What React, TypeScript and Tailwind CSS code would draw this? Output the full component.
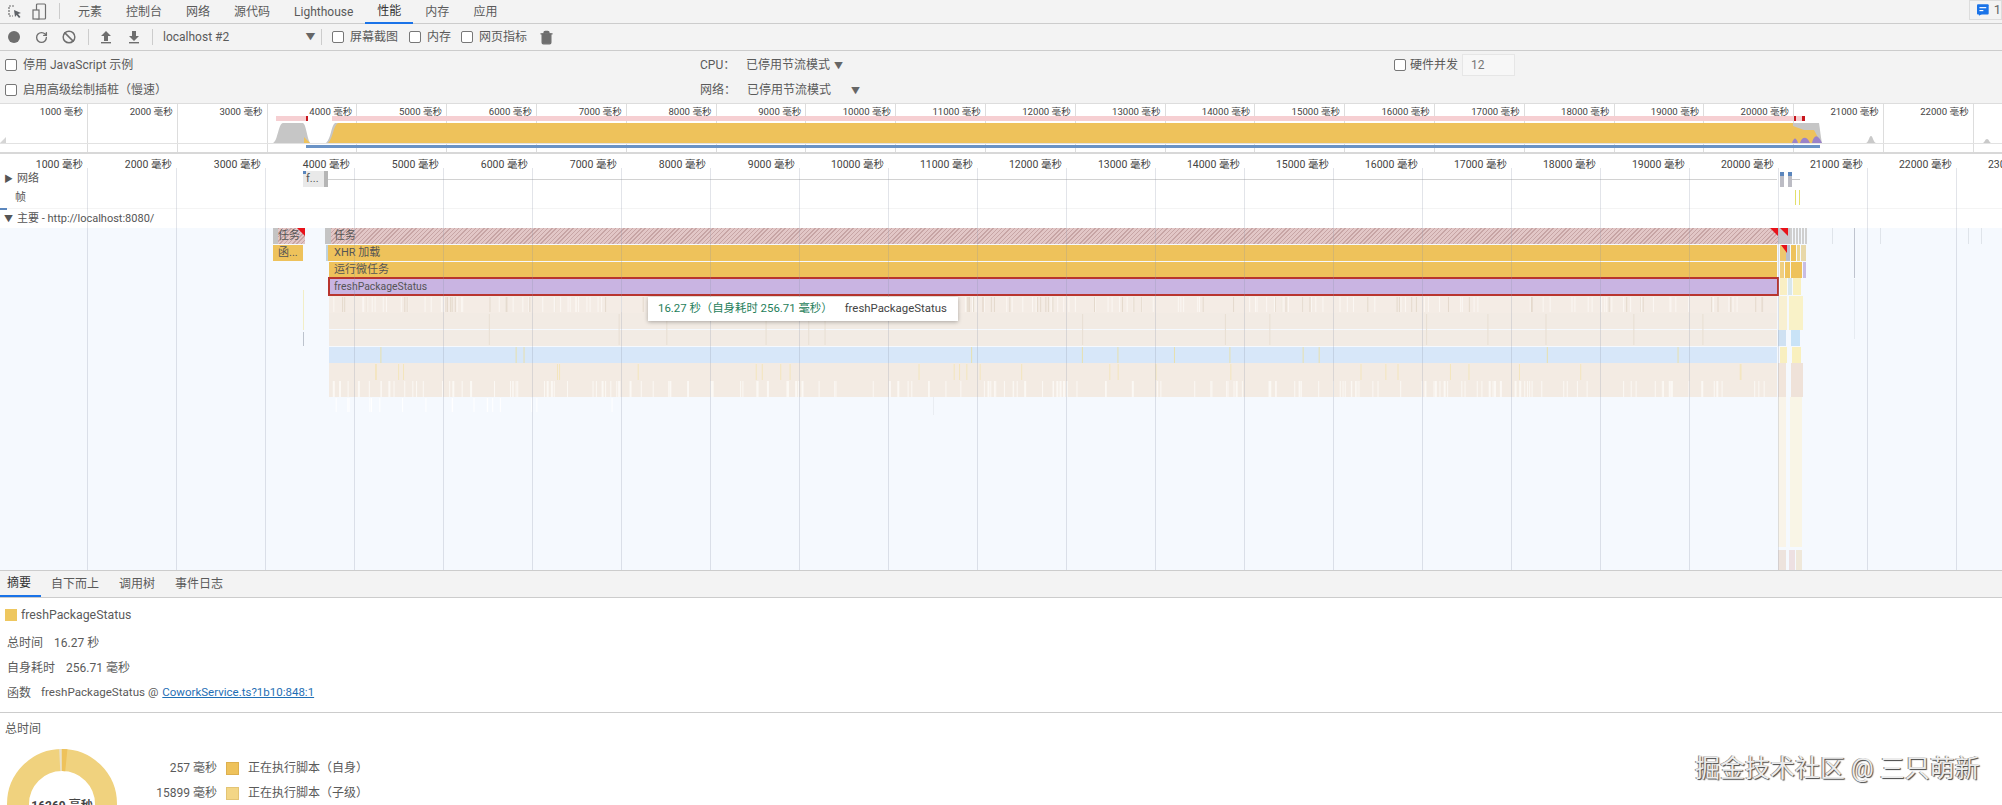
import React from 'react';
import { RotateCw, Ban, Trash2 } from 'lucide-react';

const overviewTicks = Array.from({ length: 23 }, (_, i) => (i + 1) * 1000);
const rulerTicks = Array.from({ length: 23 }, (_, i) => (i + 1) * 1000);
const panelTabs = ['元素', '控制台', '网络', '源代码', 'Lighthouse', '性能', '内存', '应用'];

// little repeatable generator so the flame texture looks the same on every run
function ticks(seed: number, from: number, to: number, count: number) {
  const out: number[] = [];
  let s = seed;
  for (let i = 0; i < count; i++) {
    s = (s * 9301 + 49297) % 233280;
    out.push(from + (s / 233280) * (to - from));
  }
  return out;
}

function Check() {
  return <input type="checkbox" className="appearance-none w-3 h-3 shrink-0 border border-[#777] rounded-[2px] bg-white" />;
}

function Sep() {
  return <div className="w-px h-4 bg-[#ccc] shrink-0" />;
}

function Tri() {
  return <span className="text-[9px] leading-none text-[#666] scale-x-110">▼</span>;
}

function InspectIcon() {
  return (
    <svg width="16" height="16" viewBox="0 0 16 16" fill="none">
      <path d="M7 2H2v10h4" stroke="#6e6e6e" strokeWidth="1.2" strokeDasharray="2 1" />
      <path d="M7 6l7 3-3 1 2.5 3-1.5 1-2.4-3L8 13z" fill="#5f6368" />
    </svg>
  );
}

function DeviceIcon() {
  return (
    <svg width="16" height="17" viewBox="0 0 16 17" fill="none">
      <rect x="4.5" y="1" width="9" height="15" rx="1" stroke="#6e6e6e" strokeWidth="1.2" />
      <rect x="1" y="7" width="6" height="9" fill="#f3f3f3" stroke="#6e6e6e" strokeWidth="1.2" />
    </svg>
  );
}

function ArrowIcon({ down }: { down?: boolean }) {
  return (
    <svg width="12" height="14" viewBox="0 0 12 14">
      <path d={down ? 'M4 1h4v5h3l-5 5-5-5h3z' : 'M6 1l5 5H8v5H4V6H1z'} fill="#6e6e6e" />
      <rect x="1" y="12" width="10" height="1.4" fill="#6e6e6e" />
    </svg>
  );
}

function OverviewChart() {
  return (
    <svg className="absolute inset-0" width="2002" height="49" viewBox="0 0 2002 49">
      <rect x="0" y="39" width="2002" height="1" fill="#e2e2e2" />
      <path d="M0 39l6-6v6zM3 39l3-3" fill="#d5d5d5" />
      <rect x="276" y="12" width="30" height="5" fill="#f6cfd2" />
      <rect x="306" y="12" width="2" height="5" fill="#c8161d" />
      <rect x="332" y="12" width="1461" height="5" fill="#f6cfd2" />
      <rect x="1794" y="12" width="2" height="5" fill="#c8161d" />
      <rect x="1796" y="12" width="6" height="5" fill="#f6cfd2" />
      <rect x="1802" y="12" width="3" height="5" fill="#c8161d" />
      <path d="M273 39C278 37 278 20 283 19L303 19C306 20 307 34 310 39Z" fill="#c6c6c6" />
      <path d="M304 33L310 39H304Z" fill="#eec25b" />
      <path d="M326 39C331 35 331 22 335 19H340V39Z" fill="#c6c6c6" />
      <path d="M328 39C333 35 333 22 338 19L1793 19L1793 39Z" fill="#eec25b" />
      <path d="M1793 19L1819 19C1820 25 1821 35 1822 39H1793Z" fill="#c6c6c6" />
      <path d="M1793 22L1804 26L1814 26L1821 39H1793Z" fill="#eec25b" />
      <path d="M1792 39C1794 33 1796 33 1798 39ZM1800 39C1802 32 1807 32 1810 39ZM1812 39C1814 30 1818 30 1822 39Z" fill="#9a83c9" />
      <path d="M1866 39C1869 38 1869 32 1871 32C1873 32 1873 38 1876 39Z" fill="#c9c9c9" />
      <path d="M1983 39C1985 38 1985 35 1987 35C1989 35 1989 38 1991 39Z" fill="#c9c9c9" />
      <rect x="306" y="41" width="1514" height="3" fill="#6a93c6" />
    </svg>
  );
}

function FlameTexture() {
  return (
    <svg className="absolute inset-0" width="2002" height="395" viewBox="0 0 2002 395">
      {/* rows below the selected call */}
      <rect x="329" y="121" width="1448" height="17" fill="#f4ece5" />
      <rect x="329" y="138" width="1448" height="16" fill="#f2ebe4" />
      <rect x="329" y="155" width="1448" height="16" fill="#f2ebe4" />
      <rect x="329" y="172" width="1448" height="16" fill="#d7e7f9" />
      <rect x="329" y="188" width="1448" height="17" fill="#f3ebe3" />
      <rect x="329" y="205" width="1448" height="17" fill="#f3ebe3" />
      {ticks(7, 332, 1776, 230).map((x, i) => (
        <rect key={i} x={x} y="122" width="1" height="15" fill={i % 3 === 0 ? '#e4d9cc' : '#fbf7f3'} />
      ))}
      {ticks(11, 340, 1770, 14).map((x, i) => (
        <rect key={i} x={x} y="139" width="1" height="31" fill="#e8dfd3" />
      ))}
      {ticks(23, 340, 1770, 12).map((x, i) => (
        <rect key={i} x={x} y="172" width="1" height="16" fill="#e7e0ae" />
      ))}
      {ticks(31, 340, 1770, 30).map((x, i) => (
        <rect key={i} x={x} y="189" width="1" height="16" fill="#f3e5bd" />
      ))}
      {ticks(43, 332, 1776, 170).map((x, i) => (
        <rect key={i} x={x} y="206" width={i % 4 === 0 ? 2 : 1} height="16" fill="#fbf8f4" />
      ))}
      {ticks(53, 332, 620, 18).map((x, i) => (
        <rect key={i} x={x} y="223" width="1" height="14" fill="#fff" />
      ))}
      <rect x="933" y="222" width="1" height="18" fill="#e9edf2" />

      {/* left call remnants */}
      <rect x="303" y="115" width="1" height="40" fill="#f2eec6" />
      <rect x="303" y="157" width="1" height="14" fill="#bcc3cd" />

      {/* end of the long task */}
      <rect x="1778" y="53" width="12" height="16" fill="#c9c6cb" />
      {[1790, 1793, 1796, 1799, 1802, 1805].map((x) => (
        <rect key={x} x={x} y="53" width="2" height="16" fill="#cfcfcf" />
      ))}
      <rect x="1780" y="70" width="6" height="16" fill="#eec76f" />
      <rect x="1786" y="70" width="4" height="16" fill="#b9bfcf" />
      <rect x="1791" y="70" width="5" height="16" fill="#eec25b" />
      <rect x="1797" y="70" width="3" height="16" fill="#ecd68f" />
      <rect x="1801" y="70" width="5" height="16" fill="#e8d8a8" />
      <rect x="1780" y="87" width="4" height="16" fill="#f0ce7e" />
      <rect x="1785" y="87" width="5" height="16" fill="#eec25b" />
      <rect x="1791" y="87" width="11" height="16" fill="#eec25b" />
      <rect x="1803" y="87" width="3" height="16" fill="#c8bde3" />
      <rect x="1780" y="103" width="7" height="17" fill="#f9efc4" />
      <rect x="1788" y="103" width="4" height="17" fill="#d8e7ec" />
      <rect x="1793" y="103" width="8" height="17" fill="#f9f0bd" />
      <rect x="1779" y="121" width="8" height="34" fill="#f8f0d2" />
      <rect x="1789" y="121" width="14" height="34" fill="#f9f2c8" />
      <rect x="1778" y="155" width="8" height="16" fill="#cfe1f2" />
      <rect x="1791" y="155" width="9" height="16" fill="#c9e3f7" />
      <rect x="1780" y="172" width="7" height="16" fill="#f8efc0" />
      <rect x="1792" y="172" width="9" height="16" fill="#f9f0be" />
      <rect x="1778" y="188" width="8" height="34" fill="#f1e5db" />
      <rect x="1791" y="188" width="12" height="34" fill="#efe2d9" />
      <rect x="1778" y="222" width="8" height="150" fill="#f9f4e9" />
      <rect x="1790" y="222" width="12" height="150" fill="#f9f5e6" />
      <rect x="1778" y="375" width="8" height="20" fill="#ede3dd" />
      <rect x="1789" y="375" width="6" height="20" fill="#ede0e2" />
      <rect x="1796" y="375" width="6" height="20" fill="#efe8da" />

      {/* short tasks after the recording */}
      {[1832, 1880, 1968, 1981].map((x) => (
        <rect key={x} x={x} y="53" width="1" height="16" fill="#dfe4ea" />
      ))}
      <rect x="1854" y="53" width="1" height="50" fill="#bfc4cf" />
      <rect x="1854" y="104" width="1" height="60" fill="#e6ebf1" />
    </svg>
  );
}

function FlameChart() {
  return (
    <div className="relative h-[395px]">
      <div className="absolute left-0 right-0 top-[53px] bottom-0 bg-[#f5f9fe]" />
      <div className="absolute left-0 top-[33px] w-[7px] h-[2px] bg-[#5b86bd]" />
      <div className="absolute left-[7px] right-0 top-[33px] h-px bg-[#f4f4f4]" />
      <FlameTexture />

      {/* track headers */}
      <div className="absolute left-[4px] top-[-4px] flex items-center gap-[4px] text-[11px] text-[#555]"><span className="text-[9px]">▶</span>网络</div>
      <div className="absolute left-[15px] top-[15px] text-[11px] text-[#555]">帧</div>
      <div className="absolute left-[4px] top-[36px] flex items-center gap-[4px] text-[11px] text-[#555]"><span className="text-[9px]">▼</span>主要 - http://localhost:8080/</div>

      {/* network requests */}
      <div className="absolute left-[303px] top-[-4px] w-[25px] h-[16px] bg-[#e9e9e9] border-r-4 border-[#b5b5b5] text-[11px] leading-[16px] text-[#555] pl-[3px]">f...</div>
      <div className="absolute left-[303px] top-[-4px] w-[3px] h-[3px] bg-[#5b86bd]" />
      <div className="absolute left-[328px] top-[4px] w-[1449px] h-px bg-[#d2d2d2]" />
      <div className="absolute left-[1780px] top-[-3px] w-[4px] h-[15px] bg-[#bcbcc4] border-t-[4px] border-[#5b86bd]" />
      <div className="absolute left-[1788px] top-[-3px] w-[4px] h-[15px] bg-[#bcbcc4] border-t-[4px] border-[#5b86bd]" />
      <div className="absolute left-[1792px] top-[4px] w-[8px] h-px bg-[#c8c8c8]" />
      <div className="absolute left-[1795px] top-[15px] w-px h-[15px] bg-[#e3e06a]" />
      <div className="absolute left-[1799px] top-[15px] w-px h-[15px] bg-[#e3e06a]" />

      {/* first small task */}
      <div className="absolute left-[273px] top-[53px] w-[32px] h-[16px] bg-[repeating-linear-gradient(135deg,#c7a5a5_0_1px,#e2c7c7_1px_3px)] border-l-[5px] border-[#c4c4c4] text-[11px] leading-[16px] text-[#555]">任务</div>
      <div className="absolute left-[295px] top-[53px] w-0 h-0 border-t-[8px] border-l-[8px] border-t-[#e8121a] border-l-transparent ml-[2px]" />
      <div className="absolute left-[273px] top-[70px] w-[30px] h-[16px] bg-[#eec25b] text-[11px] leading-[16px] text-[#555] pl-[5px]">函...</div>

      {/* long task stack */}
      <div className="absolute left-[325px] top-[53px] w-[1453px] h-[16px] bg-[repeating-linear-gradient(135deg,#c7a5a5_0_1px,#e2c7c7_1px_3px)] border-l-[6px] border-[#c4c4c4] text-[11px] leading-[16px] text-[#555] pl-[3px]">任务</div>
      <div className="absolute left-[1770px] top-[53px] w-0 h-0 border-t-[8px] border-l-[8px] border-t-[#e8121a] border-l-transparent" />
      <div className="absolute left-[1780px] top-[53px] w-0 h-0 border-t-[8px] border-l-[8px] border-t-[#e8121a] border-l-transparent" />
      <div className="absolute left-[1781px] top-[70px] w-0 h-0 border-t-[8px] border-l-[6px] border-t-[#e8121a] border-r-0 border-l-transparent" />
      <div className="absolute left-[326px] top-[70px] w-[1451px] h-[16px] bg-[#eec25b] border-l-2 border-[#bfd3df] text-[11px] leading-[16px] text-[#555] pl-[6px]">XHR 加载</div>
      <div className="absolute left-[329px] top-[87px] w-[1448px] h-[16px] bg-[#eec25b] text-[11px] leading-[16px] text-[#555] pl-[5px]">运行微任务</div>
      <div className="absolute left-[328px] top-[102px] w-[1451px] h-[19px] bg-[#c9b4e2] border-2 border-[#b8352f] text-[10.4px] leading-[15px] text-[#555] pl-[4px]">freshPackageStatus</div>

      {/* grid lines */}
      <div className="absolute left-0 right-0 top-[-7px] bottom-0 flex overflow-hidden pointer-events-none">
        <div className="w-[88px] shrink-0 border-r border-[#8a95a8]/25" />
        {rulerTicks.slice(1).map((t) => (
          <div key={t} className="w-[89px] shrink-0 border-r border-[#8a95a8]/25" />
        ))}
      </div>

      {/* hover tooltip */}
      <div className="absolute left-[648px] top-[122px] h-[24px] w-[310px] bg-white shadow-[0_1px_4px_rgba(0,0,0,0.3)] flex items-center pl-[10px] text-[11.4px] whitespace-nowrap">
        <span className="text-[#1e7e5a]">16.27 秒（自身耗时 256.71 毫秒）</span>
        <span className="ml-[12px] text-[#444]">freshPackageStatus</span>
      </div>
    </div>
  );
}

export default function App() {
  return (
    <div className="relative w-[2002px] h-[805px] overflow-hidden bg-white text-[12px] text-[#5a5a5a] [font-family:Roboto,'Noto_Sans_CJK_SC',sans-serif]">
      {/* devtools tabs */}
      <div className="flex items-stretch h-[24px] bg-[#f3f3f3] border-b border-[#ccc]">
        <div className="w-[23px] flex items-center justify-end"><InspectIcon /></div>
        <div className="w-[25px] flex items-center justify-end"><DeviceIcon /></div>
        <div className="ml-[11px] mt-[3px] w-px h-4 bg-[#ccc]" />
        <div className="ml-[6px] flex">
          {panelTabs.map((t) => (
            <div key={t} className={t === '性能' ? 'px-3 flex items-center text-[#333] border-b-2 border-[#1a73e8] mb-[-1px]' : 'px-3 flex items-center'}>{t}</div>
          ))}
        </div>
        <div className="ml-auto w-[33px] h-[20px] border border-[#ddd] flex items-center gap-[5px] pl-[7px]">
          <svg width="12" height="12" viewBox="0 0 12 12">
            <rect width="12" height="10.5" rx="1" fill="#1a73e8" />
            <path d="M2 10h3l-3 2z" fill="#1a73e8" />
            <rect x="2.5" y="3" width="7" height="1.2" fill="#fff" />
            <rect x="2.5" y="6" width="4" height="1.2" fill="#fff" />
          </svg>
          <span className="text-[#666] text-[13px]">1</span>
        </div>
      </div>

      {/* toolbar */}
      <div className="flex items-center h-[27px] bg-[#f3f3f3] border-b border-[#ccc]">
        <div className="w-[27px] flex justify-center"><div className="w-3 h-3 rounded-full bg-[#6e6e6e]" /></div>
        <div className="w-[28px] flex justify-center"><RotateCw size={13} strokeWidth={2.5} color="#6e6e6e" /></div>
        <div className="w-[28px] flex justify-center"><Ban size={14} strokeWidth={2.5} color="#6e6e6e" /></div>
        <div className="ml-[5px]"><Sep /></div>
        <div className="ml-[3px] w-[28px] flex justify-center"><ArrowIcon /></div>
        <div className="w-[28px] flex justify-center"><ArrowIcon down /></div>
        <div className="ml-[4px]"><Sep /></div>
        <div className="ml-[10px] w-[158px] flex items-center justify-between pr-[6px]">
          <span>localhost #2</span>
          <Tri />
        </div>
        <Sep />
        <div className="ml-[10px] flex items-center gap-[6px]"><Check /><span>屏幕截图</span></div>
        <div className="ml-[11px] flex items-center gap-[6px]"><Check /><span>内存</span></div>
        <div className="ml-[10px] flex items-center gap-[6px]"><Check /><span>网页指标</span></div>
        <div className="ml-[12px]"><Trash2 size={15} fill="#6e6e6e" color="#6e6e6e" /></div>
      </div>

      {/* capture settings */}
      <div className="grid grid-cols-[700px_694px_1fr] grid-rows-[25px_25px] h-[53px] pt-[1px] bg-[#f3f3f3] border-b border-[#ddd]">
        <div className="flex items-center gap-[6px] pl-[5px]"><Check /><span>停用 JavaScript 示例</span></div>
        <div className="flex items-center">
          <span className="w-[46px]">CPU：</span>
          <span>已停用节流模式</span>
          <span className="ml-[4px]"><Tri /></span>
        </div>
        <div className="flex items-center">
          <Check />
          <span className="ml-[4px]">硬件并发</span>
          <span className="ml-[4px] w-[53px] h-[22px] pl-[8px] flex items-center bg-[#f7f7f7] border border-[#e6e6e6] text-[#777]">12</span>
        </div>
        <div className="flex items-center gap-[6px] pl-[5px]"><Check /><span>启用高级绘制插桩（慢速）</span></div>
        <div className="flex items-center">
          <span className="w-[47px]">网络：</span>
          <span>已停用节流模式</span>
          <span className="ml-[20px]"><Tri /></span>
        </div>
      </div>

      {/* overview strip */}
      <div className="relative h-[50px] border-b-2 border-[#d8d8d8]">
        <div className="relative flex h-full overflow-hidden text-[9.6px] text-[#444]">
          <div className="w-[88px] shrink-0 border-r border-[#ddd] text-right pr-[4px] pt-[1px]">1000 毫秒</div>
          {overviewTicks.slice(1, 22).map((t) => (
            <div key={t} className="w-[89.8px] shrink-0 border-r border-[#ddd] text-right pr-[4px] pt-[1px] whitespace-nowrap">{t} 毫秒</div>
          ))}
        </div>
        <OverviewChart />
      </div>

      {/* time ruler */}
      <div className="flex h-[21px] items-center overflow-hidden text-[10.5px] text-[#444]">
        <div className="w-[88px] shrink-0 text-right pr-[5px]">1000 毫秒</div>
        {rulerTicks.slice(1).map((t) => (
          <div key={t} className="w-[89px] shrink-0 text-right pr-[5px] whitespace-nowrap">{t} 毫秒</div>
        ))}
      </div>

      <FlameChart />

      {/* details tabs */}
      <div className="flex h-[28px] bg-[#f3f3f3] border-y border-[#ccc]">
        <div className="pl-[7px] pr-[10px] flex items-center text-[#333] border-b-2 border-[#1a73e8]">摘要</div>
        <div className="px-[10px] flex items-center">自下而上</div>
        <div className="px-[10px] flex items-center">调用树</div>
        <div className="px-[10px] flex items-center">事件日志</div>
      </div>

      {/* summary */}
      <div className="h-[115px] pt-[6px] border-b border-[#ccc]">
        <div className="h-[22px] flex items-center pl-[5px]">
          <span className="w-3 h-3 bg-[#eec75f]" />
          <span className="ml-[4px] text-[12.3px]">freshPackageStatus</span>
        </div>
        <div className="mt-[4px] h-[25px] flex items-center pl-[7px]"><span>总时间</span><span className="ml-[11px]">16.27 秒</span></div>
        <div className="h-[25px] flex items-center pl-[7px]"><span>自身耗时</span><span className="ml-[11px]">256.71 毫秒</span></div>
        <div className="h-[25px] flex items-center pl-[7px]">
          <span>函数</span>
          <span className="ml-[10px] text-[11.6px]">freshPackageStatus @ </span>
          <span className="ml-[4px] text-[11.5px] text-[#1f6fb5] underline">CoworkService.ts?1b10:848:1</span>
        </div>
      </div>

      {/* total time breakdown */}
      <div className="pl-[5px] pt-[6px] h-[25px] leading-[20px] text-[12px]">总时间</div>
      <div className="flex mt-[11px]">
        <div className="relative ml-[7px] w-[110px] h-[110px] shrink-0">
          <svg width="110" height="110" viewBox="0 0 110 110">
            <circle cx="55" cy="55" r="44" fill="none" stroke="#f0d27e" strokeWidth="22" />
            <circle cx="55" cy="55" r="44" fill="none" stroke="#eec25b" strokeWidth="22" strokeDasharray="4.4 272" transform="rotate(-90 55 55)" />
            <circle cx="55" cy="55" r="44" fill="none" stroke="#e8e0cc" strokeWidth="22" strokeDasharray="2 275" transform="rotate(-93 55 55)" />
          </svg>
          <div className="absolute inset-0 flex items-center justify-center pt-[3px] text-[12px] font-bold text-[#444] whitespace-nowrap">16269 毫秒</div>
        </div>
        <div className="ml-[10px] mt-[11px] flex flex-col gap-[9px]">
          <div className="flex items-center h-[16px]">
            <span className="w-[90px] text-right whitespace-nowrap">257 毫秒</span>
            <span className="ml-[9px] w-[13px] h-[13px] bg-[#eec25b] border border-[#ddb04f]" />
            <span className="ml-[9px]">正在执行脚本（自身）</span>
          </div>
          <div className="flex items-center h-[16px]">
            <span className="w-[90px] text-right whitespace-nowrap">15899 毫秒</span>
            <span className="ml-[9px] w-[13px] h-[13px] bg-[#f3d686] border border-[#e3c474]" />
            <span className="ml-[9px]">正在执行脚本（子级）</span>
          </div>
        </div>
      </div>

      {/* site watermark */}
      <div className="absolute left-[1695px] top-[753px] text-[25px] leading-[32px] text-[#ececec] whitespace-nowrap [text-shadow:1px_1px_1px_#444,-1px_0_0_#888]">掘金技术社区 @ 三只萌新</div>
    </div>
  );
}
